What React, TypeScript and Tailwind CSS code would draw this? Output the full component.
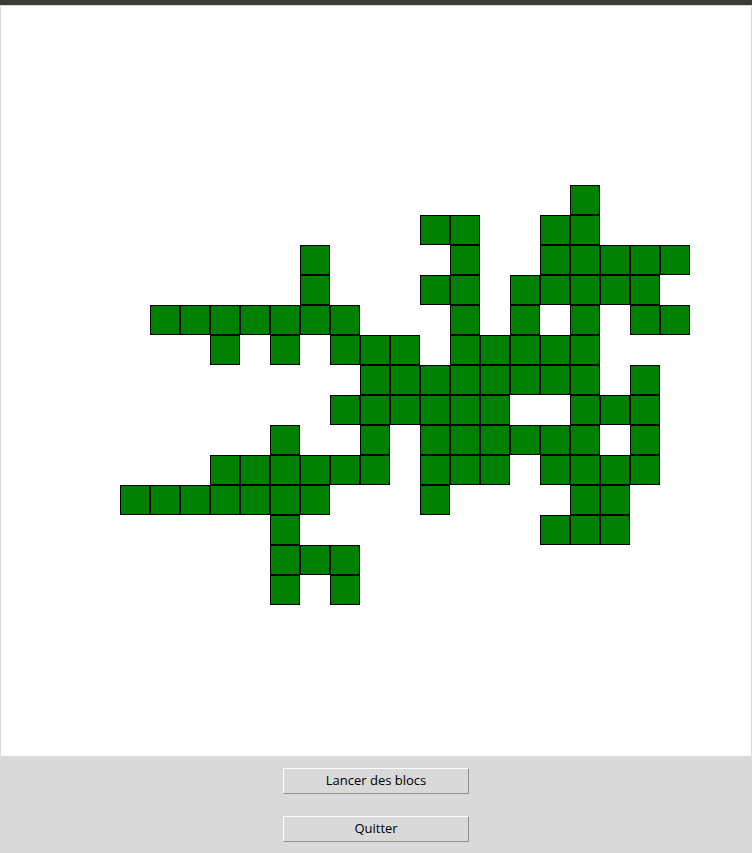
import React from "react";

const ROWS = [
  "...............#...",
  "..........##..##...",
  "......#....#..#####",
  "......#...##.#####.",
  ".#######...#.#.#.##",
  "...#.#.###.#####...",
  "........########.#.",
  ".......######..###.",
  ".....#..#.######.#.",
  "...######.###.####.",
  "#######...#....##..",
  ".....#........###..",
  ".....###...........",
  ".....#.#...........",
];

function Btn({ label }: { label: string }) {
  return (
    <button className="w-[186px] h-[26px] bg-[#d9d9d9] border border-t-white border-l-white border-r-[#8f8f8f] border-b-[#8f8f8f] text-[13px] leading-none text-black font-['Open_Sans',sans-serif] flex items-center justify-center pb-[2px]">
      {label}
    </button>
  );
}

export default function App() {
  return (
    <div className="w-[752px] h-[853px] bg-[#d9d9d9] flex flex-col overflow-hidden">
      <div className="h-[5px] bg-[#3c3b37] shrink-0" />
      <div className="w-[752px] h-[752px] shrink-0 border border-[#d9d9d9] bg-white pl-[119px] pt-[179px]">
        <div className="grid grid-cols-[repeat(19,30px)] auto-rows-[30px]">
          {ROWS.flatMap((row, r) =>
            row.split("").map((ch, c) =>
              ch === "#" ? (
                <div key={`${r}-${c}`} className="w-[30px] h-[30px] border border-black bg-[#008000]" />
              ) : (
                <div key={`${r}-${c}`} className="w-[30px] h-[30px]" />
              )
            )
          )}
        </div>
      </div>
      <div className="flex flex-col items-center pt-[11px] gap-[22px]">
        <Btn label="Lancer des blocs" />
        <Btn label="Quitter" />
      </div>
    </div>
  );
}
